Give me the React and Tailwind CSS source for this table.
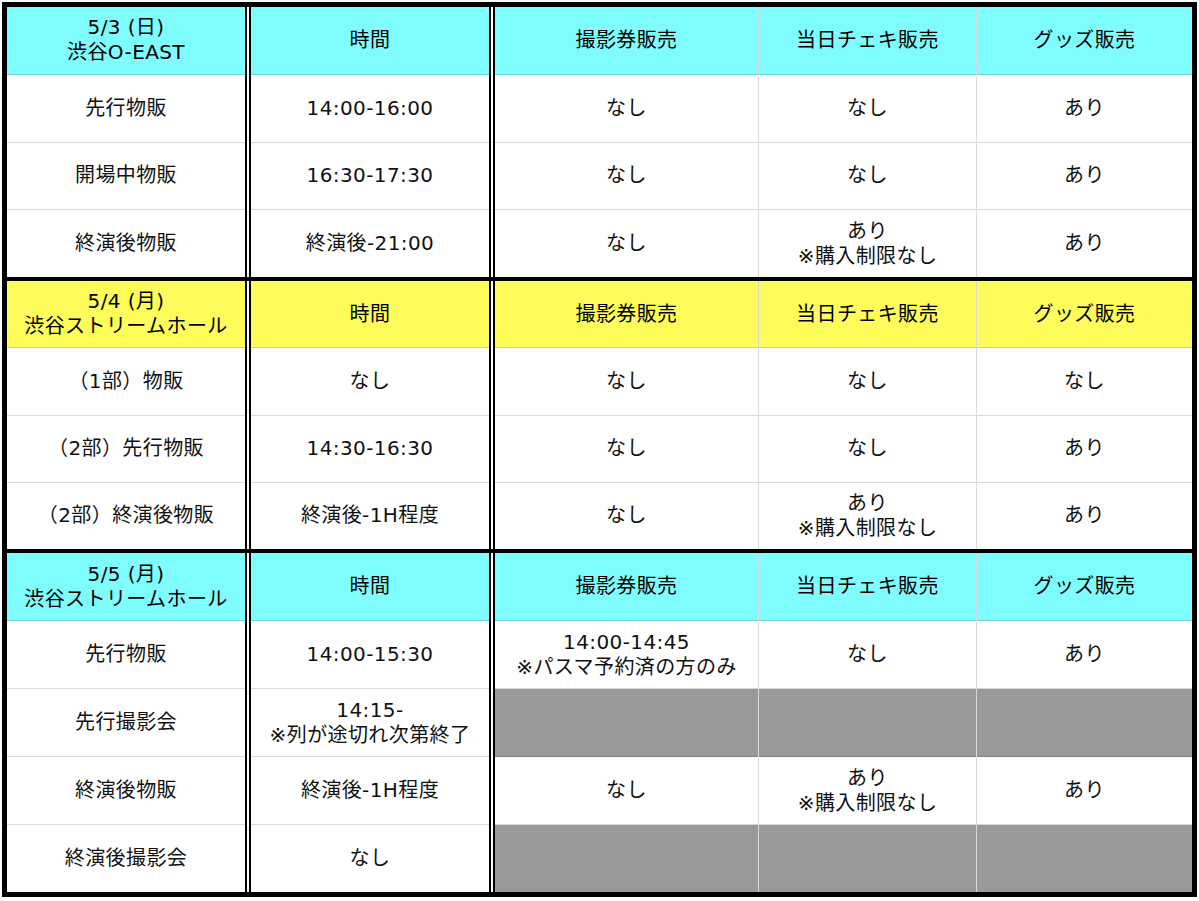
const CYAN = "bg-[#7ffcfd]";
const YELLOW = "bg-[#fdfc5b]";

const HEAD = ["時間", "撮影券販売", "当日チェキ販売", "グッズ販売"];
const LIMIT = "あり\n※購入制限なし";

const sections = [
  {
    bg: CYAN,
    title: "5/3 (日)\n渋谷O-EAST",
    h: "h-[270px]",
    rows: [
      ["先行物販", "14:00-16:00", "なし", "なし", "あり"],
      ["開場中物販", "16:30-17:30", "なし", "なし", "あり"],
      ["終演後物販", "終演後-21:00", "なし", LIMIT, "あり"],
    ],
  },
  {
    bg: YELLOW,
    title: "5/4 (月)\n渋谷ストリームホール",
    h: "h-[272px]",
    rows: [
      ["（1部）物販", "なし", "なし", "なし", "なし"],
      ["（2部）先行物販", "14:30-16:30", "なし", "なし", "あり"],
      ["（2部）終演後物販", "終演後-1H程度", "なし", LIMIT, "あり"],
    ],
  },
  {
    bg: CYAN,
    title: "5/5 (月)\n渋谷ストリームホール",
    h: "h-[343px]",
    rows: [
      ["先行物販", "14:00-15:30", "14:00-14:45\n※パスマ予約済の方のみ", "なし", "あり"],
      ["先行撮影会", "14:15-\n※列が途切れ次第終了", null, null, null],
      ["終演後物販", "終演後-1H程度", "なし", LIMIT, "あり"],
      ["終演後撮影会", "なし", null, null, null],
    ],
  },
];

const WIDTHS = ["w-[238px]", "w-[238px]", "w-[264px]", "w-[218px]", "flex-1"];

function Cell({ children, bg, last }) {
  return (
    <div
      className={`flex-1 min-h-0 flex items-center justify-center text-center whitespace-pre-line leading-[25px] ${
        last ? "" : "border-b border-black/15"
      } ${bg}`}
    >
      {children}
    </div>
  );
}

function Column({ section, idx }) {
  const head = idx === 0 ? section.title : HEAD[idx - 1];
  const divider = idx === 2 || idx === 3 ? "border-r border-black/15" : "";
  return (
    <div className={`${WIDTHS[idx]} flex flex-col ${divider}`}>
      <Cell bg={section.bg}>
        <span className="text-black">{head}</span>
      </Cell>
      {section.rows.map((row, i) => {
        const v = row[idx];
        return (
          <Cell key={i} bg={v === null ? "bg-[#999999]" : "bg-white"} last={i === section.rows.length - 1}>
            {v}
          </Cell>
        );
      })}
    </div>
  );
}

function Sep() {
  return <div className="w-[6px] border-x-2 border-black bg-white" />;
}

export default function App() {
  return (
    <div className="w-[1199px] h-[901px] bg-white pt-[2px] pl-[2px] font-['DejaVu_Sans','Noto_Sans_CJK_JP',sans-serif] text-[20px] tracking-[0.4px] text-[#111]">
      <div className="w-[1195px] border-[5px] border-black flex flex-col">
        {sections.map((s, si) => (
          <div key={si} className={`flex ${s.h} ${si > 0 ? "border-t-4 border-black" : ""}`}>
            <Column section={s} idx={0} />
            <Sep />
            <Column section={s} idx={1} />
            <Sep />
            <Column section={s} idx={2} />
            <Column section={s} idx={3} />
            <Column section={s} idx={4} />
          </div>
        ))}
      </div>
    </div>
  );
}
